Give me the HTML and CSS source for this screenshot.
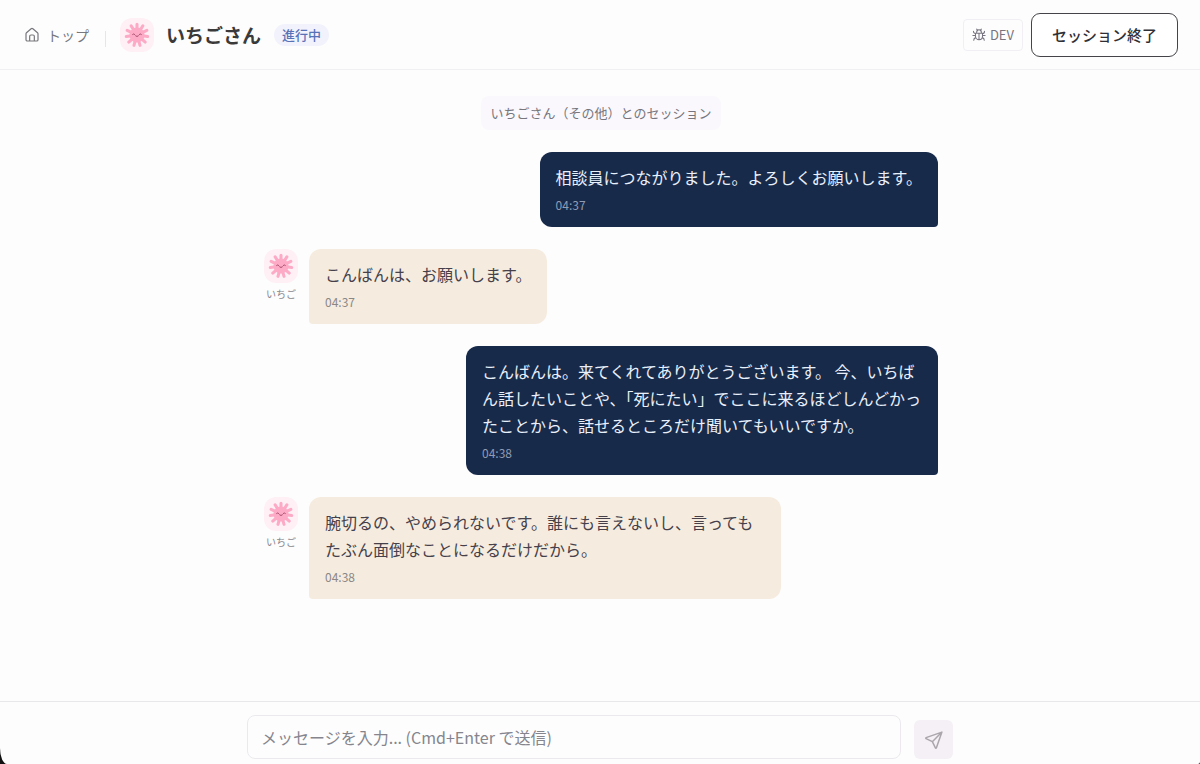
FILE: index.html
```html
<!DOCTYPE html>
<html lang="ja">
<head>
    <meta charset="UTF-8">
    <meta name="viewport" content="width=device-width, initial-scale=1.0">
    <title>いちごさん</title>
    <link rel="stylesheet" href="styles.css">
</head>
<body>
    <svg class="sprite" aria-hidden="true">
        <symbol id="flower" viewBox="0 0 24 24">
            <path d="M12 12V2M12 12L17.400 3.600M12 12L21.100 7.800M12 12L21.900 13.400M12 12L19.600 18.500M12 12L14.800 21.600M12 12L9.200 21.600M12 12L4.400 18.500M12 12L2.100 13.400M12 12L2.900 7.800M12 12L6.600 3.600" stroke="#fcaac5" stroke-width="2.800" stroke-linecap="round"/>
            <circle cx="12" cy="12" r="7" fill="#fcaac5"/>
            <path d="M8 11.4q.9-.9 1.8 0M14.2 11.4q.9-.9 1.8 0M10.7 12.8q1.3 1.4 2.6 0" fill="none" stroke="#a5486b" stroke-width=".9" stroke-linecap="round"/>
        </symbol>
    </svg>

    <header class="header">
        <a class="home" href="#">
            <svg width="16" height="16" viewBox="0 0 24 24" fill="none" stroke="currentColor" stroke-width="1.8" stroke-linejoin="round">
                <path d="M3 10.2a2 2 0 0 1 .7-1.5l7-6a2 2 0 0 1 2.6 0l7 6a2 2 0 0 1 .7 1.5V19a2 2 0 0 1-2 2H5a2 2 0 0 1-2-2z"/>
                <path d="M8.5 21v-7a2 2 0 0 1 2-2h3a2 2 0 0 1 2 2v7"/>
            </svg>
            トップ
        </a>
        <span class="divider"></span>
        <span class="avatar"><svg width="26" height="26"><use href="#flower"/></svg></span>
        <h1 class="title">いちごさん</h1>
        <span class="status">進行中</span>
        <div class="actions">
            <button class="dev" type="button">
                <svg width="14" height="14" viewBox="0 0 24 24" fill="none" stroke="currentColor" stroke-width="1.8" stroke-linecap="round" stroke-linejoin="round">
                    <path d="M8 2l2 2.5M16 2l-2 2.5M8 7.5V7a4 4 0 0 1 8 0v.5M6 9h12v5a6 6 0 0 1-12 0zM12 9v11M6 13H1.5M22.5 13H18M6 9.500C4 9.500 2.500 8 2.500 5.500M18 9.500c2 0 3.500-1.500 3.500-4M6.500 16.500C4.500 17 3 18.500 3 21M17.500 16.500c2 .5 3.500 2 3.500 4.500"/>
                </svg>
                DEV
            </button>
            <button class="finish" type="button">セッション終了</button>
        </div>
    </header>

    <main class="chat">
        <p class="notice">いちごさん（その他）とのセッション</p>

        <div class="message mine">
            <div class="bubble">
                <p>相談員につながりました。よろしくお願いします。</p>
                <time>04:37</time>
            </div>
        </div>

        <div class="message">
            <div class="sender">
                <span class="avatar"><svg width="26" height="26"><use href="#flower"/></svg></span>
                <span class="name">いちご</span>
            </div>
            <div class="bubble">
                <p>こんばんは、お願いします。</p>
                <time>04:37</time>
            </div>
        </div>

        <div class="message mine">
            <div class="bubble">
                <p>こんばんは。来てくれてありがとうございます。 今、いちばん話したいことや、「死にたい」でここに来るほどしんどかったことから、話せるところだけ聞いてもいいですか。</p>
                <time>04:38</time>
            </div>
        </div>

        <div class="message">
            <div class="sender">
                <span class="avatar"><svg width="26" height="26"><use href="#flower"/></svg></span>
                <span class="name">いちご</span>
            </div>
            <div class="bubble">
                <p>腕切るの、やめられないです。誰にも言えないし、言ってもたぶん面倒なことになるだけだから。</p>
                <time>04:38</time>
            </div>
        </div>
    </main>

    <footer class="footer">
        <form class="composer">
            <textarea class="input" rows="1" aria-label="メッセージ" placeholder="メッセージを入力... (Cmd+Enter で送信)"></textarea>
            <button class="send" type="button" aria-label="送信">
                <svg width="20" height="20" viewBox="0 0 24 24" fill="none" stroke="currentColor" stroke-width="1.8" stroke-linecap="round" stroke-linejoin="round">
                    <path d="M21.500 2.500L2.500 9.200a.6.6 0 0 0 0 1.100l7.500 3.700 3.700 7.500a.6.6 0 0 0 1.100 0zM21.500 2.500L10 14"/>
                </svg>
            </button>
        </form>
    </footer>
</body>
</html>
```

FILE: styles.css
```css
* {
    box-sizing: border-box;
}
html {
    background: #111;
}
body {
    display: flex;
    flex-direction: column;
    min-height: 100vh;
    margin: 0;
    background: #fdfdfd;
    border-radius: 0 0 2px 7px / 0 0 2px 16px;
    color: #3a3a40;
    font-family: "Noto Sans CJK JP", sans-serif;
    font-size: 16px;
}
p {
    margin: 0;
}
button {
    font-family: inherit;
    cursor: pointer;
}
.sprite {
    display: none;
}

/* header */
.header {
    display: flex;
    align-items: center;
    height: 70px;
    padding: 0 22px 0 24px;
    border-bottom: 1px solid #f0f0f2;
}
.home {
    display: flex;
    align-items: center;
    gap: 7px;
    color: #77777d;
    font-size: 14px;
    text-decoration: none;
}
.divider {
    width: 1px;
    height: 16px;
    margin: 8px 14px 0 16px;
    background: #e6e6ea;
}
.avatar {
    display: flex;
    align-items: center;
    justify-content: center;
    width: 34px;
    height: 34px;
    border-radius: 12px;
    background: #fff0f5;
}
.title {
    margin: 0 13px 0 12px;
    color: #3a3a3a;
    font-size: 19px;
    font-weight: 700;
}
.status {
    padding: 0 8px;
    border-radius: 11px;
    background: #f1f2fc;
    color: #5872b8;
    font-size: 13px;
    font-weight: 500;
    line-height: 22px;
}
.actions {
    display: flex;
    align-items: center;
    gap: 8px;
    margin-left: auto;
}
.dev {
    display: flex;
    align-items: center;
    gap: 4px;
    height: 32px;
    padding: 0 8px;
    border: 1px solid #f1eff4;
    border-radius: 4px;
    background: none;
    color: #77747f;
    font-size: 13px;
}
.finish {
    height: 44px;
    padding: 0 20px;
    border: 1px solid #444449;
    border-radius: 9px;
    background: #fff;
    color: #2f2f36;
    font-size: 15px;
    font-weight: 500;
}

/* messages */
.chat {
    display: flex;
    flex: 1;
    flex-direction: column;
    gap: 22px;
    width: 100%;
    max-width: 706px;
    margin: 0 auto;
    padding: 26px 15px 26px 17px;
}
.notice {
    align-self: center;
    padding: 0 10px;
    border-radius: 8px;
    background: #faf8fc;
    color: #77767c;
    font-size: 13px;
    line-height: 34px;
}
.message {
    display: flex;
    gap: 11px;
}
.mine {
    justify-content: flex-end;
}
.sender {
    display: flex;
    flex-direction: column;
    align-items: center;
    width: 34px;
}
.name {
    color: #8a8a90;
    font-size: 10px;
    line-height: 22px;
    white-space: nowrap;
}
.bubble {
    max-width: 472px;
    padding: 12px 16px 13px;
    border-radius: 12px 12px 12px 4px;
    background: #f5ecdf;
    color: #45404a;
    line-height: 27px;
}
.bubble time {
    display: block;
    margin-top: 5px;
    color: #8a8786;
    font-size: 12px;
    line-height: 18px;
}
.mine .bubble {
    border-radius: 12px 12px 4px 12px;
    background: #182a4a;
    color: #e8f0fb;
}
.mine time {
    color: #8f9cb3;
}

/* composer */
.footer {
    padding: 13px 16px 5px;
    border-top: 1px solid #e8e8ea;
}
.composer {
    display: flex;
    align-items: flex-end;
    gap: 13px;
    max-width: 706px;
    margin: 0 auto;
}
.input {
    flex: 1;
    height: 44px;
    padding: 9px 13px;
    border: 1px solid #ebe9ed;
    border-radius: 8px;
    outline: none;
    background: #fdfdfd;
    font-family: inherit;
    font-size: 16px;
    line-height: 24px;
    resize: none;
}
.input::placeholder {
    color: #85858e;
}
.send {
    display: flex;
    align-items: center;
    justify-content: center;
    width: 39px;
    height: 39px;
    padding: 0;
    border: none;
    border-radius: 6px;
    background: #f4f0f5;
    color: #aaa6ac;
}
```
